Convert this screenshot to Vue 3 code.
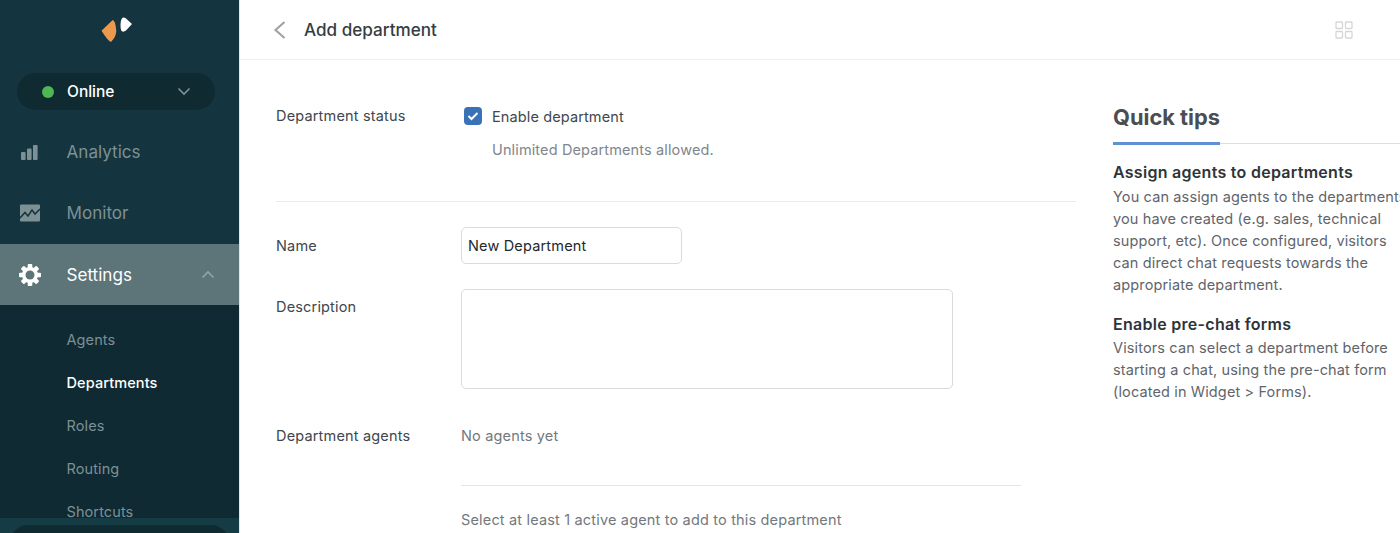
<script setup>
const subItems = [
  { label: 'Agents' },
  { label: 'Departments', active: true },
  { label: 'Roles' },
  { label: 'Routing' },
  { label: 'Shortcuts' },
]
</script>

<template>
  <div class="page">
    <aside class="sidebar">
      <div class="logo">
        <svg width="34" height="28" viewBox="0 0 34 28">
          <path d="M1.500 14.700 L12.700 4 Q15.500 4.500 16.300 15 Q16 21 11 26 Q8 25 1.500 14.700 Z" fill="#e99a4e" />
          <path d="M23 1.500 Q25 1.500 26 2.500 L32 8 L26 14.500 Q24 16 22.500 15.500 Q20.500 15 20.500 9 Q20.500 3 23 1.500 Z" fill="#fff" />
        </svg>
      </div>
      <div class="status">
        <span class="dot"></span>
        <span class="status-label">Online</span>
        <svg class="chev" width="14" height="9" viewBox="0 0 14 9"><path d="M1.500 1.500 L7 7 L12.500 1.500" fill="none" stroke="#7f9296" stroke-width="1.600" /></svg>
      </div>
      <nav class="nav">
        <div class="nav-item">
          <span class="nav-icon">
            <svg width="20" height="18" viewBox="0 0 20 18" fill="#7d9094">
              <rect x="2" y="9" width="4.600" height="8" rx="1" /><rect x="8" y="5.500" width="4.600" height="11.500" rx="1" /><rect x="14" y="2" width="4.600" height="15" rx="1" />
            </svg>
          </span>
          <span>Analytics</span>
        </div>
        <div class="nav-item">
          <span class="nav-icon">
            <svg width="22" height="18" viewBox="0 0 22 18">
              <rect x="1" y="0.500" width="20" height="17" rx="1" fill="#7d9094" />
              <path d="M1 14 L6 8.500 L9 12 L13 6 L16 10 L21 5" fill="none" stroke="#14353f" stroke-width="1.500" />
            </svg>
          </span>
          <span>Monitor</span>
        </div>
        <div class="nav-item selected">
          <span class="nav-icon">
            <svg width="24" height="24" viewBox="0 0 24 24">
              <g fill="#fff"><rect v-for="a in [0, 45, 90, 135]" :key="a" x="9.700" y="1" width="4.600" height="22" rx="1" :transform="`rotate(${a} 12 12)`" /></g>
              <circle cx="12" cy="12" r="8" fill="#fff" />
              <circle cx="12" cy="12" r="4.500" fill="#5d7479" />
            </svg>
          </span>
          <span>Settings</span>
          <svg class="chev-up" width="14" height="9" viewBox="0 0 14 9"><path d="M1.500 7.500 L7 2 L12.500 7.500" fill="none" stroke="#93a5a8" stroke-width="1.600" /></svg>
        </div>
      </nav>
      <ul class="sub">
        <li v-for="item in subItems" :key="item.label" :class="{ active: item.active }">{{ item.label }}</li>
      </ul>
      <div class="foot"><div class="foot-pill"></div></div>
    </aside>

    <main class="main">
      <header class="top">
        <svg class="back" width="13" height="18" viewBox="0 0 13 18"><path d="M11.500 1 L2.500 9 L11.500 17" fill="none" stroke="#a0a4a8" stroke-width="2.200" /></svg>
        <h1>Add department</h1>
        <svg class="grid" width="18" height="18" viewBox="0 0 18 18" fill="none" stroke="#d4d6d8" stroke-width="1.300">
          <rect x="1" y="1" width="6.500" height="6.500" rx="0.800" /><rect x="10.500" y="1" width="6.500" height="6.500" rx="0.800" />
          <rect x="1" y="10.500" width="6.500" height="6.500" rx="0.800" /><rect x="10.500" y="10.500" width="6.500" height="6.500" rx="0.800" />
        </svg>
      </header>
      <div class="body">
        <section class="form">
          <div class="status-row">
            <div class="label">Department status</div>
            <div class="status-col">
              <label class="check">
                <span class="box">
                  <svg width="12" height="10" viewBox="0 0 12 10"><path d="M1.500 5 L4.500 8 L10.500 2" fill="none" stroke="#fff" stroke-width="2" /></svg>
                </span>
                Enable department
              </label>
              <div class="hint">Unlimited Departments allowed.</div>
            </div>
          </div>
          <div class="rule"></div>
          <div class="row name-row">
            <div class="label">Name</div>
            <div class="input">New Department</div>
          </div>
          <div class="row desc-row">
            <div class="label">Description</div>
            <div class="textarea"></div>
          </div>
          <div class="row agents-row">
            <div class="label">Department agents</div>
            <div class="agents">
              <div class="muted">No agents yet</div>
              <div class="agents-rule"></div>
              <div class="muted">Select at least 1 active agent to add to this department</div>
            </div>
          </div>
        </section>
        <aside class="tips">
          <div class="tips-head"><h2>Quick tips</h2></div>
          <h3>Assign agents to departments</h3>
          <p>You can assign agents to the departments<br />you have created (e.g. sales, technical<br />support, etc). Once configured, visitors<br />can direct chat requests towards the<br />appropriate department.</p>
          <h3>Enable pre-chat forms</h3>
          <p>Visitors can select a department before<br />starting a chat, using the pre-chat form<br />(located in Widget &gt; Forms).</p>
        </aside>
      </div>
    </main>
  </div>
</template>

<style>
html, body { margin: 0; background: #fff; overflow: hidden; }
</style>

<style scoped>
.page { display: flex; width: 1400px; height: 533px; overflow: hidden; font-family: Inter, "Liberation Sans", sans-serif; font-size: 14.500px; letter-spacing: 0.17px; color: #40474d; background: #fff; }
.sidebar { position: relative; flex: 0 0 239px; height: 533px; overflow: hidden; background: #14353f; border-right: 1px solid #e4e7e8; box-sizing: content-box; letter-spacing: 0; }
.logo { height: 73px; padding: 16px 0 0 100px; box-sizing: border-box; }
.status { display: flex; align-items: center; height: 37px; margin: 0 24px 0 17px; padding: 0 24px 0 25px; border-radius: 19px; background: #102a31; color: #fff; font-size: 15.500px; font-weight: 500; }
.dot { width: 12px; height: 12px; border-radius: 50%; background: #4fb653; margin-right: 13px; }
.status-label { flex: 1; }
.nav { margin-top: 11px; }
.nav-item { display: flex; align-items: center; height: 61.500px; box-sizing: border-box; padding-left: 19px; color: #7d9094; font-size: 17.100px; }
.nav-item:nth-child(2) { padding-bottom: 1px; }
.nav-icon { width: 47.500px; display: flex; align-items: center; }
.nav-item.selected { background: #5d7479; color: #fff; height: 61px; }
.nav-item.selected svg { margin-left: -1px; }
.nav-item.selected .chev-up { margin-left: auto; }
.chev-up { margin-right: 24px; }
.sub { list-style: none; margin: 0; padding: 13px 0 0 66.500px; height: 228px; box-sizing: border-box; background: #0f2a33; color: #7d9094; font-size: 14.500px; letter-spacing: 0.1px; }
.sub li { height: 43px; line-height: 43px; }
.sub li.active { color: #fff; font-weight: 500; }
.foot { position: absolute; left: 0; right: 0; bottom: 0; height: 15px; background: #153b44; padding: 7px 10px 0; box-sizing: border-box; }
.foot-pill { height: 20px; border-radius: 18px 18px 0 0; background: #102a31; }

.main { flex: 1; min-width: 0; }
.top { display: flex; align-items: center; height: 60px; box-sizing: border-box; border-bottom: 1px solid #eeeff0; padding: 0 47px 0 33px; }
.back { margin-right: 18px; }
h1 { margin: 0; flex: 1; font-size: 17.100px; letter-spacing: 0; font-weight: 500; color: #353c42; }
.body { display: flex; padding: 0 0 0 36px; }
.form { flex: 0 0 800px; }
.status-row { display: flex; height: 141px; box-sizing: border-box; padding-top: 46px; }
.label { flex: 0 0 185px; line-height: 20px; }
.status-row .label { flex-basis: 188px; }
.check { display: flex; align-items: center; height: 20px; letter-spacing: 0.12px; }
.box { display: flex; align-items: center; justify-content: center; width: 18px; height: 18px; border-radius: 4px; background: #3a72b8; margin-right: 10px; }
.hint { margin: 13px 0 0 28px; padding-top: 1px; line-height: 20px; color: #80868c; letter-spacing: 0.13px; }
.rule { height: 1px; background: #e9eaeb; }
.row { display: flex; }
.name-row { margin-top: 25px; align-items: center; }
.input { width: 221px; height: 37px; box-sizing: border-box; border: 1px solid #d9dbdd; border-radius: 5px; padding: 0 6px; line-height: 35px; color: #23282c; }
.desc-row { margin-top: 25px; }
.desc-row .label { padding-top: 8px; }
.textarea { width: 492px; height: 100px; box-sizing: border-box; border: 1px solid #d9dbdd; border-radius: 5px; }
.agents-row { margin-top: 37px; }
.agents { width: 560px; }
.muted { line-height: 20px; color: #72787e; }
.agents-rule { height: 1px; background: #e4e5e7; margin: 39px 0 24px; }
.tips { flex: 0 0 auto; margin-left: 37px; width: 300px; }
.tips-head { margin-top: 42px; border-bottom: 1px solid #dcdde0; height: 41px; }
h2 { display: inline-block; height: 40px; margin: 0; border-bottom: 3px solid #5f92cf; font-size: 21.800px; letter-spacing: 0; line-height: 30px; font-weight: 700; color: #4a4e52; white-space: nowrap; }
h3 { margin: 17px 0 3px; font-size: 16px; letter-spacing: 0.28px; line-height: 22px; font-weight: 600; color: #2e3439; white-space: nowrap; }
p + h3 { margin: 17px 0 2px; }
p { margin: 0; font-size: 14.500px; letter-spacing: 0.13px; line-height: 22px; color: #5f656b; white-space: nowrap; }
</style>
